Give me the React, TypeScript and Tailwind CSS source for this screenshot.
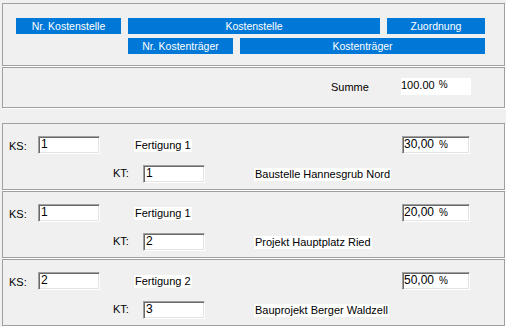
import React from "react";

const sunken =
  "bg-white border border-t-[#a0a0a0] border-l-[#a0a0a0] border-r-white border-b-white shadow-[inset_1px_1px_0_#696969,inset_-1px_-1px_0_#e3e3e3]";

function Btn({ w, children }: { w: string; children: React.ReactNode }) {
  return (
    <div
      className={`${w} h-[16px] bg-[#0078d7] text-white text-[10.5px] leading-[16px] text-center whitespace-nowrap`}
    >
      {children}
    </div>
  );
}

function Entry({
  ks,
  ksName,
  kt,
  ktName,
  pct,
}: {
  ks: string;
  ksName: string;
  kt: string;
  ktName: string;
  pct: string;
}) {
  return (
    <div className="ml-[2px] mt-[1px] h-[67px] w-[503px] border border-[#a0a0a0] shadow-[1px_1px_0_#ffffff]">
      <div className="flex items-start pt-[12px]">
        <span className="ml-[6px] w-[29px] mt-[4px] leading-[13px]">KS:</span>
        <div className={`w-[62px] h-[18px] ${sunken} pl-[2px] pt-[1px] text-[12px] leading-[13px]`}>
          {ks}
        </div>
        <div className="ml-[34px] w-[268px] mt-[1px]">
          <span className="bg-white px-[1px] leading-[13px] inline-block whitespace-nowrap">{ksName}</span>
        </div>
        <div className={`w-[68px] h-[18px] ${sunken} pl-[1px] pt-[1px] text-[12px] leading-[13px] flex items-start whitespace-nowrap`}>
          <span>{pct}</span>
          <span className="ml-[5px] text-[10px]">%</span>
        </div>
      </div>
      <div className="flex items-start mt-[11px]">
        <span className="ml-[110px] w-[30px] mt-[2px] leading-[13px]">KT:</span>
        <div className={`w-[62px] h-[18px] ${sunken} pl-[2px] pt-[1px] text-[12px] leading-[13px]`}>
          {kt}
        </div>
        <div className="ml-[49px] mt-[1px]">
          <span className="bg-white px-[1px] leading-[13px] inline-block whitespace-nowrap">{ktName}</span>
        </div>
      </div>
    </div>
  );
}

export default function App() {
  return (
    <div
      className="w-[506px] h-[327px] overflow-hidden bg-[#f0f0f0] text-black text-[11px] pt-[3px]"
      style={{ fontFamily: '"Liberation Sans", Arial, sans-serif' }}
    >
      <div className="ml-[2px] h-[63px] w-[503px] border border-[#a0a0a0] shadow-[1px_1px_0_#ffffff] pt-[14px] pl-[13px]">
        <div className="flex gap-[7px]">
          <Btn w="w-[105px]">Nr. Kostenstelle</Btn>
          <Btn w="w-[252px]">Kostenstelle</Btn>
          <Btn w="w-[98px]">Zuordnung</Btn>
        </div>
        <div className="flex gap-[7px] mt-[4px] ml-[112px]">
          <Btn w="w-[105px]">Nr. Kostenträger</Btn>
          <Btn w="w-[245px]">Kostenträger</Btn>
        </div>
      </div>

      <div className="ml-[2px] mt-[1px] h-[41px] w-[503px] border border-[#a0a0a0] shadow-[1px_1px_0_#ffffff] pt-[10px]">
        <div className="flex items-start">
          <span className="ml-[328px] w-[70px] mt-[3px] leading-[13px]">Summe</span>
          <div className="w-[70px] h-[17px] bg-white flex items-start text-[11px] leading-[12px] pt-[1px] whitespace-nowrap">
            <span>100.00</span>
            <span className="ml-[4px] text-[10px]">%</span>
          </div>
        </div>
      </div>

      <div className="h-[14px]" />

      <Entry ks="1" ksName="Fertigung 1" kt="1" ktName="Baustelle Hannesgrub Nord" pct="30,00" />
      <Entry ks="1" ksName="Fertigung 1" kt="2" ktName="Projekt Hauptplatz Ried" pct="20,00" />
      <Entry ks="2" ksName="Fertigung 2" kt="3" ktName="Bauprojekt Berger Waldzell" pct="50,00" />
    </div>
  );
}
